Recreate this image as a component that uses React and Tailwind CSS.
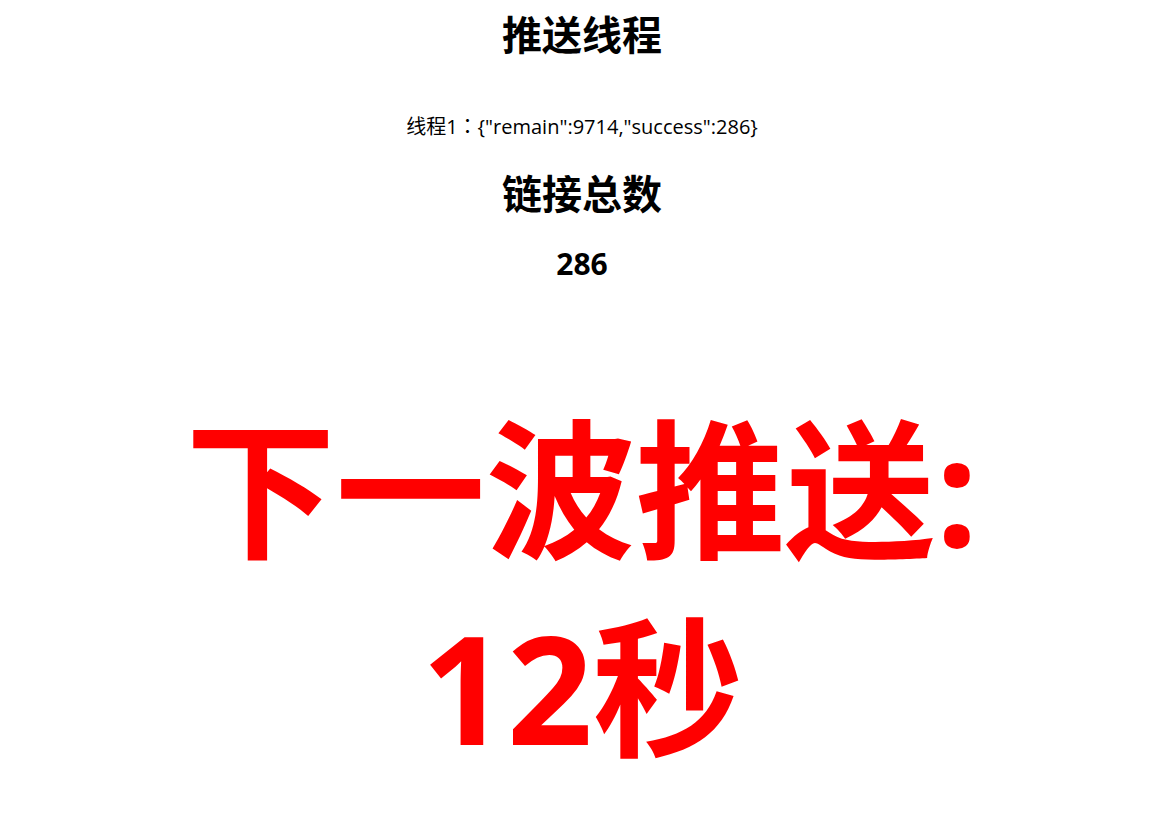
export default function App() {
  const font = { fontFamily: '"Open Sans", "Noto Sans CJK SC", sans-serif' };
  return (
    <div className="w-full min-h-[832px] bg-white text-black text-center" style={font}>
      <div className="text-[40px] font-bold leading-[70px]">推送线程</div>
      <div className="mt-[41px] text-[20px] leading-[30px]">
        线程1<span className="[font-family:'Noto_Sans_CJK_TC',sans-serif]">：</span>{'{"remain":9714,"success":286}'}
      </div>
      <div className="mt-[25px] text-[40px] font-bold leading-[54px]">链接总数</div>
      <div className="mt-[23px] text-[30px] font-bold leading-[40px]">286</div>
      <div className="mt-[106px] text-[150px] font-bold leading-[198px] text-[#ff0000]">
        <div>下一波推送:</div>
        <div>12秒</div>
      </div>
    </div>
  );
}
